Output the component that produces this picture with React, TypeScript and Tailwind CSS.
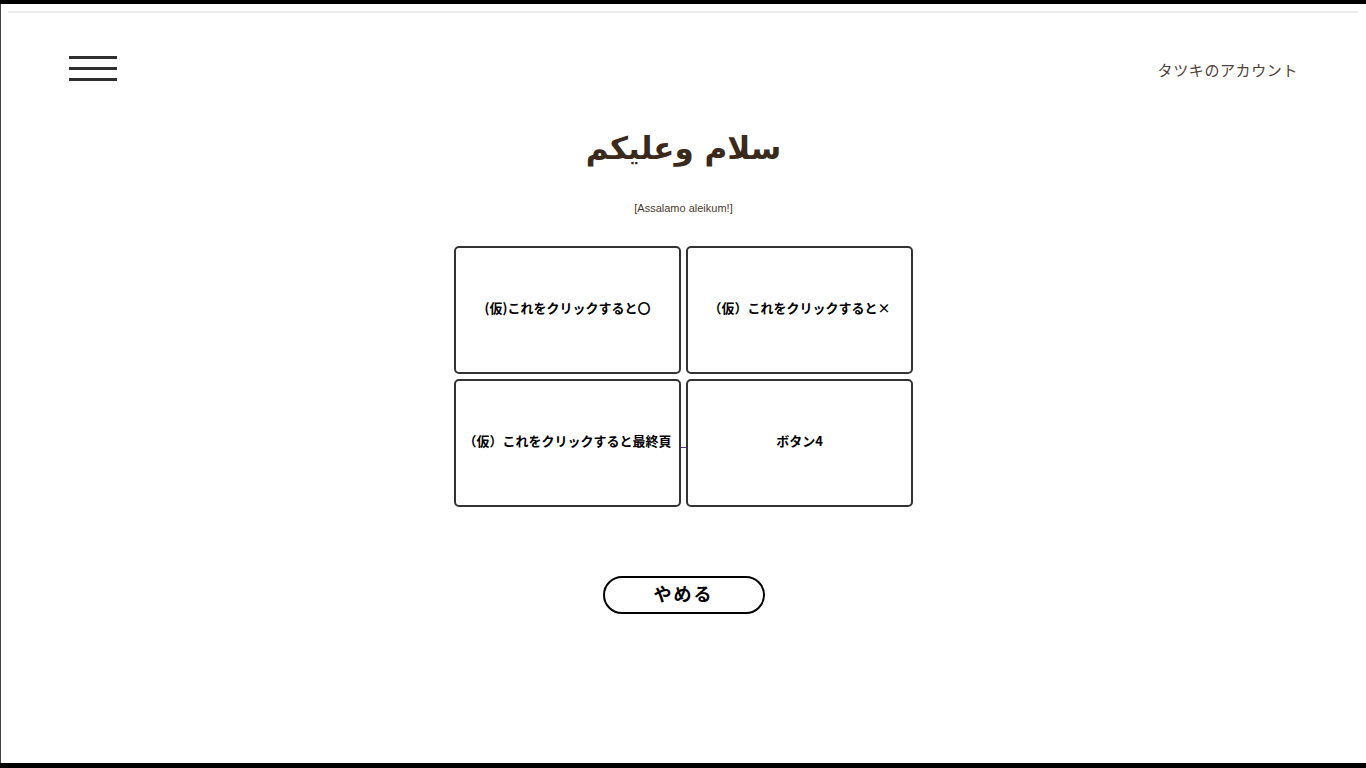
export default function App() {
  const jp = { fontFamily: '"Noto Sans CJK JP", "Noto Sans", sans-serif' };
  const choice =
    "flex h-[128px] w-[227px] items-center justify-center rounded-[5px] border-2 border-[#333] bg-white pb-[4px] text-[13px] font-bold text-black";

  return (
    <div className="h-[768px] w-full overflow-hidden bg-black pt-[4px] pb-[5px]">
      <div className="flex h-full flex-col border-l border-[#444] bg-white">
        {/* top rule */}
        <div className="ml-[7px] mr-[8px] mt-[7px] h-[2px] bg-[#ececec]" />

        {/* header */}
        <header className="flex items-center justify-between pl-[68px] pr-[68px] pt-[43px]">
          <button className="flex w-[48px] flex-col gap-[8px]">
            <span className="h-[3px] w-full bg-[#2e2e2e]" />
            <span className="h-[3px] w-full bg-[#2e2e2e]" />
            <span className="h-[3px] w-full bg-[#2e2e2e]" />
          </button>
          <span className="pt-[3px] text-[15px] tracking-[0.6px] text-[#4f4038]" style={jp}>
            タツキのアカウント
          </span>
        </header>

        {/* title */}
        <main className="flex flex-col items-center">
          <h1
            className="mt-[41px] text-[31px] font-bold leading-[50px] text-[#3b2a1c]"
            style={{ fontFamily: '"DejaVu Sans", sans-serif' }}
            dir="rtl"
          >
            سلام وعليكم
          </h1>
          <p
            className="mt-[27px] text-[11px] text-[#4a3a2c]"
            style={{ fontFamily: '"Liberation Sans", Arial, sans-serif' }}
          >
            [Assalamo aleikum!]
          </p>

          {/* choices */}
          <div className="mt-[30px] flex flex-col gap-[5px]" style={jp}>
            <div className="flex gap-[5px]">
              <button className={choice}>(仮)これをクリックすると〇</button>
              <button className={choice}>（仮）これをクリックすると×</button>
            </div>
            <div className="flex">
              <button className={choice}>（仮）これをクリックすると最終頁</button>
              <div className="flex w-[5px] items-center pt-[9px]">
                <span className="h-px w-full bg-[#5b2ca0]" />
              </div>
              <button className={choice}>ボタン4</button>
            </div>
          </div>

          <button
            className="mt-[69px] flex h-[38px] w-[162px] items-center justify-center rounded-full border-2 border-black bg-white pb-[3px] text-[18px] font-bold tracking-[2px] text-black"
            style={jp}
          >
            やめる
          </button>
        </main>
      </div>
    </div>
  );
}
